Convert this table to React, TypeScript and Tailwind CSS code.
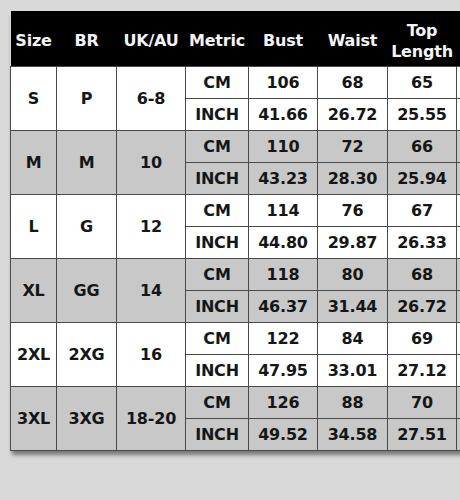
import React from 'react';

const rows = [
  { size: 'S', br: 'P', uk: '6-8', cm: ['106', '68', '65'], inch: ['41.66', '26.72', '25.55'], gray: false },
  { size: 'M', br: 'M', uk: '10', cm: ['110', '72', '66'], inch: ['43.23', '28.30', '25.94'], gray: true },
  { size: 'L', br: 'G', uk: '12', cm: ['114', '76', '67'], inch: ['44.80', '29.87', '26.33'], gray: false },
  { size: 'XL', br: 'GG', uk: '14', cm: ['118', '80', '68'], inch: ['46.37', '31.44', '26.72'], gray: true },
  { size: '2XL', br: '2XG', uk: '16', cm: ['122', '84', '69'], inch: ['47.95', '33.01', '27.12'], gray: false },
  { size: '3XL', br: '3XG', uk: '18-20', cm: ['126', '88', '70'], inch: ['49.52', '34.58', '27.51'], gray: true },
];

const cell = 'border border-[#4a4a4a] text-center align-middle p-0 pt-[1px]';
const head = 'p-0 pt-[5px] font-bold';

export default function App() {
  return (
    <div
      className="w-[460px] h-[500px] overflow-hidden bg-[#d9d9d9] pt-[11px] pl-[10px]"
      style={{ fontFamily: '"DejaVu Sans", Verdana, sans-serif' }}
    >
      <table className="table-fixed border-collapse w-[486px] text-[16px] font-bold text-[#161616] tracking-[-0.2px] shadow-[2px_4px_4px_rgba(0,0,0,0.45)]">
        <colgroup>
          <col className="w-[46px]" />
          <col className="w-[60px]" />
          <col className="w-[69px]" />
          <col className="w-[63px]" />
          <col className="w-[69px]" />
          <col className="w-[70px]" />
          <col className="w-[69px]" />
          <col className="w-[40px]" />
        </colgroup>
        <thead>
          <tr className="h-[55px] bg-black text-[#f4f4f4]">
            <th className={head}>Size</th>
            <th className={head}>BR</th>
            <th className={head}>UK/AU</th>
            <th className={head}>Metric</th>
            <th className={head}>Bust</th>
            <th className={head}>Waist</th>
            <th className={`${head} leading-[21px]`}>
              Top
              <br />
              Length
            </th>
            <th className="p-0" />
          </tr>
        </thead>
        <tbody>
          {rows.map((r) => {
            const bg = r.gray ? 'bg-[#c8c8c8]' : 'bg-white';
            return (
              <React.Fragment key={r.size}>
                <tr className={`h-[32px] ${bg}`}>
                  <td rowSpan={2} className={cell}>{r.size}</td>
                  <td rowSpan={2} className={cell}>{r.br}</td>
                  <td rowSpan={2} className={cell}>{r.uk}</td>
                  <td className={cell}>CM</td>
                  {r.cm.map((v, i) => (
                    <td key={i} className={cell}>{v}</td>
                  ))}
                  <td className={cell} />
                </tr>
                <tr className={`h-[32px] ${bg}`}>
                  <td className={cell}>INCH</td>
                  {r.inch.map((v, i) => (
                    <td key={i} className={cell}>{v}</td>
                  ))}
                  <td className={cell} />
                </tr>
              </React.Fragment>
            );
          })}
        </tbody>
      </table>
    </div>
  );
}
